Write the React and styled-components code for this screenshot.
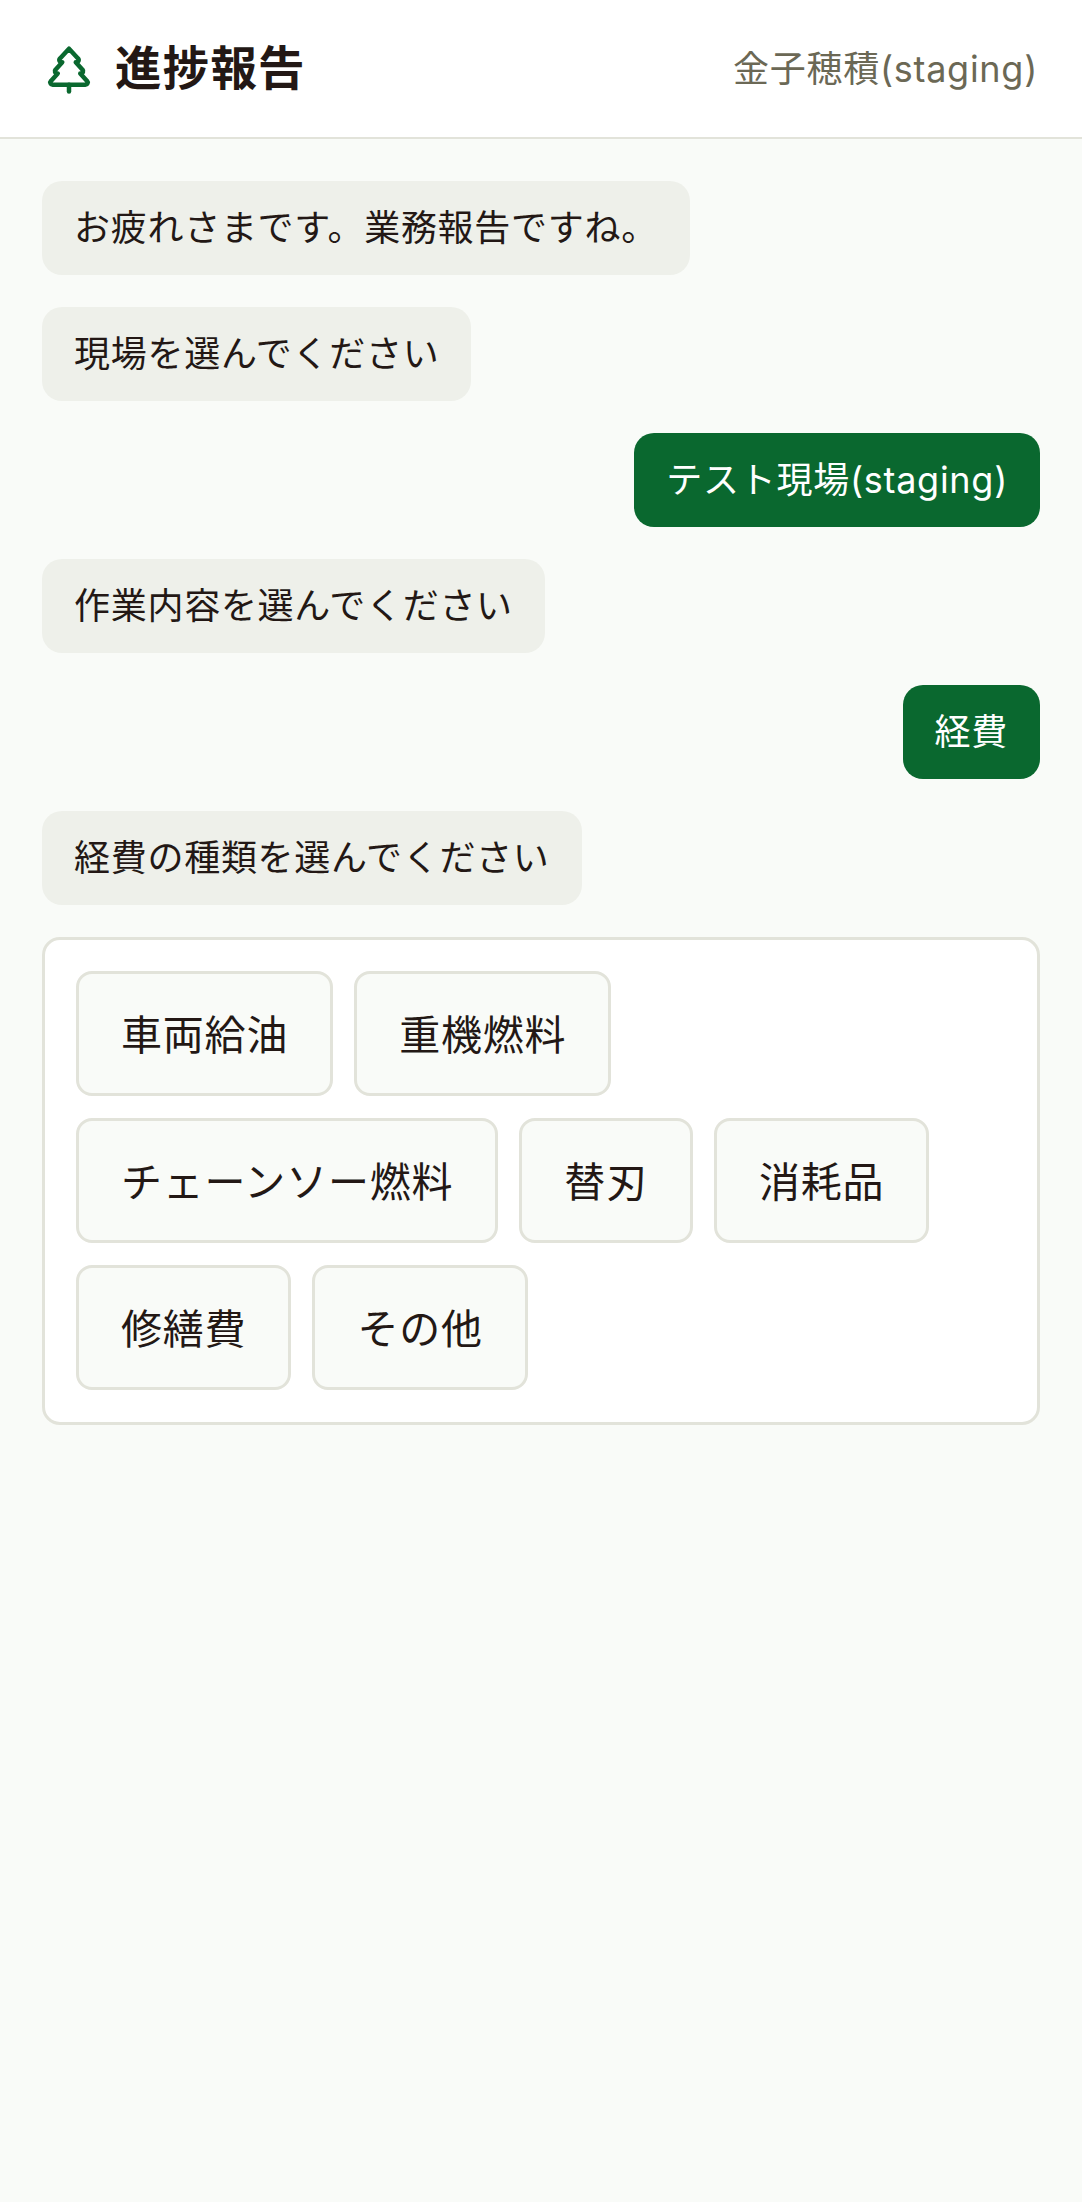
import React from 'react';
import styled, {createGlobalStyle} from 'styled-components';
import {TreePine} from 'lucide-react';

const GlobalStyle = createGlobalStyle`
html, body {
  margin: 0;
  padding: 0;
  background: #f9fbf8;
}
body {
  font-family: Inter, "Noto Sans CJK JP", sans-serif;
  color: #231815;
  letter-spacing: 0.72px;
}
`;

const messages = [
  {id: 1, text: 'お疲れさまです。業務報告ですね。'},
  {id: 2, text: '現場を選んでください'},
  {id: 3, text: 'テスト現場(staging)', mine: true},
  {id: 4, text: '作業内容を選んでください'},
  {id: 5, text: '経費', mine: true},
  {id: 6, text: '経費の種類を選んでください'},
];

const options = ['車両給油', '重機燃料', 'チェーンソー燃料', '替刃', '消耗品', '修繕費', 'その他'];

const App = () => {
  return (
    <Page>
      <GlobalStyle />
      <Header>
        <Brand>
          <TreePine size={54} color="#0a682f" strokeWidth={2} />
          <Title>進捗報告</Title>
        </Brand>
        <UserName>金子穂積(staging)</UserName>
      </Header>
      <Chat>
        {messages.map(m => (
          <Bubble key={m.id} $mine={m.mine}>{m.text}</Bubble>
        ))}
        <OptionCard>
          {options.map(o => (
            <OptionButton key={o}>{o}</OptionButton>
          ))}
        </OptionCard>
      </Chat>
    </Page>
  );
};

const Page = styled.div`
min-height: 2202px;
background: #f9fbf8;
`;

const Header = styled.header`
display: flex;
align-items: center;
justify-content: space-between;
height: 137px;
padding: 0 44px 0 42px;
background: #fff;
border-bottom: 2px solid #e2e3da;
`;

const Brand = styled.div`
display: flex;
align-items: center;
gap: 19px;
`;

const Title = styled.h1`
margin: 0;
font-size: 46.5px;
font-weight: 700;
line-height: 1.5;
letter-spacing: 1.2px;
`;

const UserName = styled.span`
font-size: 36px;
color: #6b6855;
margin-bottom: 6px;
`;

const Chat = styled.main`
display: flex;
flex-direction: column;
gap: 32px;
padding: 42px 42px 0;
`;

const Bubble = styled.div`
align-self: ${p => (p.$mine ? 'flex-end' : 'flex-start')};
padding: 20px 32px;
height: 94px;
box-sizing: border-box;
border-radius: 20px;
font-size: 36px;
line-height: 54px;
background: ${p => (p.$mine ? '#0a682f' : '#eef0ea')};
color: ${p => (p.$mine ? '#fff' : '#231815')};
`;

const OptionCard = styled.section`
display: flex;
flex-wrap: wrap;
gap: 22px 21px;
padding: 31px 31px 32px;
background: #fff;
border: 3px solid #e2e3da;
border-radius: 18px;
`;

const OptionButton = styled.button`
height: 125px;
padding: 0 42px 4px;
background: #f9fbf8;
border: 3px solid #e2e3da;
border-radius: 16px;
font-family: inherit;
font-size: 41px;
letter-spacing: 0.8px;
color: #231815;
`;

export default App;
